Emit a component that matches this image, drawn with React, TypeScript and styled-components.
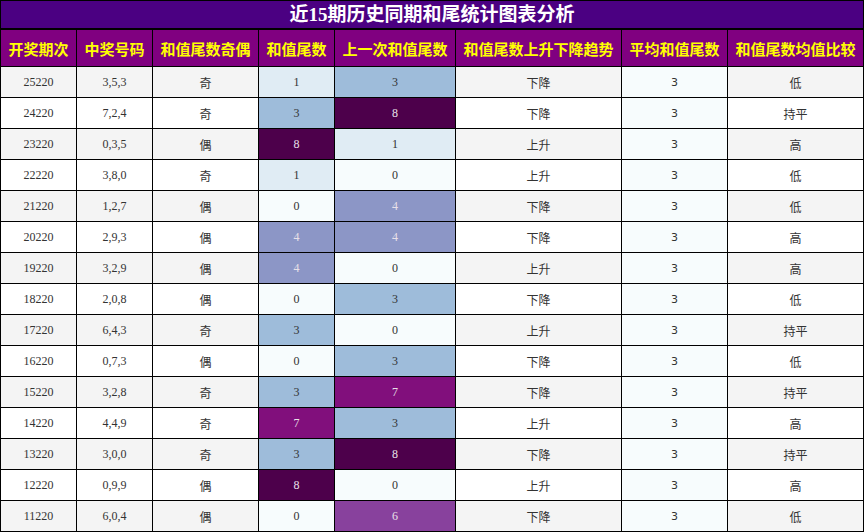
import React from "react";
import styled, { createGlobalStyle } from "styled-components";

const GlobalStyle = createGlobalStyle`
  html, body { margin: 0; padding: 0; background: #ffffff; }
  body { font-family: "Liberation Serif", "Noto Sans CJK SC", serif; }
`;

const Frame = styled.div`
  width: 864px;
  box-sizing: border-box;
  background: #000;
  padding: 1px;
  display: flex;
  flex-direction: column;
  gap: 2px;
`;

const Title = styled.div`
  height: 27px;
  background: #4b0082;
  color: #ffffff;
  font-family: "Liberation Serif", "Noto Sans CJK SC", serif;
  font-weight: bold;
  font-size: 19px;
  display: flex;
  align-items: center;
  justify-content: center;
  line-height: 1;
`;

const Grid = styled.div`
  display: grid;
  grid-template-columns: 75px 75px 105px 75px 120px 165px 105px 135px;
  grid-template-rows: 36px;
  grid-auto-rows: 30px;
  gap: 1px;
  background: #000;
`;

const HeadCell = styled.div`
  background: #800080;
  color: #ffff00;
  font-family: "Noto Sans CJK SC", sans-serif;
  font-weight: bold;
  font-size: 15px;
  display: flex;
  align-items: center;
  justify-content: center;
  white-space: nowrap;
`;

const Cell = styled.div<{ $bg: string; $fg?: string; $kind?: "num" | "cjk" | "avg" }>`
  background: ${(p) => p.$bg};
  color: ${(p) => p.$fg ?? "#333333"};
  font-family: ${(p) =>
    p.$kind === "cjk"
      ? '"Noto Sans CJK SC", sans-serif'
      : p.$kind === "avg"
      ? '"DejaVu Sans", "Noto Sans CJK SC", sans-serif'
      : '"Liberation Serif", "Noto Sans CJK SC", serif'};
  font-size: ${(p) => (p.$kind === "avg" ? "11px" : "12px")};
  display: flex;
  align-items: center;
  justify-content: center;
  white-space: nowrap;
`;

const headers = [
  "开奖期次",
  "中奖号码",
  "和值尾数奇偶",
  "和值尾数",
  "上一次和值尾数",
  "和值尾数上升下降趋势",
  "平均和值尾数",
  "和值尾数均值比较",
];

type Row = [string, string, string, number, number, string, number, string];

const rows: Row[] = [
  ["25220", "3,5,3", "奇", 1, 3, "下降", 3, "低"],
  ["24220", "7,2,4", "奇", 3, 8, "下降", 3, "持平"],
  ["23220", "0,3,5", "偶", 8, 1, "上升", 3, "高"],
  ["22220", "3,8,0", "奇", 1, 0, "上升", 3, "低"],
  ["21220", "1,2,7", "偶", 0, 4, "下降", 3, "低"],
  ["20220", "2,9,3", "偶", 4, 4, "下降", 3, "高"],
  ["19220", "3,2,9", "偶", 4, 0, "上升", 3, "高"],
  ["18220", "2,0,8", "偶", 0, 3, "下降", 3, "低"],
  ["17220", "6,4,3", "奇", 3, 0, "上升", 3, "持平"],
  ["16220", "0,7,3", "偶", 0, 3, "下降", 3, "低"],
  ["15220", "3,2,8", "奇", 3, 7, "下降", 3, "持平"],
  ["14220", "4,4,9", "奇", 7, 3, "上升", 3, "高"],
  ["13220", "3,0,0", "奇", 3, 8, "下降", 3, "持平"],
  ["12220", "0,9,9", "偶", 8, 0, "上升", 3, "高"],
  ["11220", "6,0,4", "偶", 0, 6, "下降", 3, "低"],
];

const scale = [
  "#f7fcfd",
  "#e0ecf4",
  "#bfd3e6",
  "#9ebcda",
  "#8c96c6",
  "#8c6bb1",
  "#88419d",
  "#810f7c",
  "#4d004b",
];

const heatBg = (v: number) => scale[Math.max(0, Math.min(8, v))];
const heatFg = (v: number) => (v >= 4 ? "#e8e0e8" : "#333333");

export default function App() {
  return (
    <>
      <GlobalStyle />
      <Frame>
        <Title>近15期历史同期和尾统计图表分析</Title>
        <Grid>
          {headers.map((h) => (
            <HeadCell key={h}>{h}</HeadCell>
          ))}
          {rows.map((r, i) => {
            const base = i % 2 === 0 ? "#f4f4f4" : "#ffffff";
            return (
              <React.Fragment key={r[0]}>
                <Cell $bg={base}>{r[0]}</Cell>
                <Cell $bg={base}>{r[1]}</Cell>
                <Cell $bg={base} $kind="cjk">{r[2]}</Cell>
                <Cell $bg={heatBg(r[3])} $fg={heatFg(r[3])}>{r[3]}</Cell>
                <Cell $bg={heatBg(r[4])} $fg={heatFg(r[4])}>{r[4]}</Cell>
                <Cell $bg={base} $kind="cjk">{r[5]}</Cell>
                <Cell $bg="#f7fcfd" $kind="avg">{r[6]}</Cell>
                <Cell $bg={base} $kind="cjk">{r[7]}</Cell>
              </React.Fragment>
            );
          })}
        </Grid>
      </Frame>
    </>
  );
}
